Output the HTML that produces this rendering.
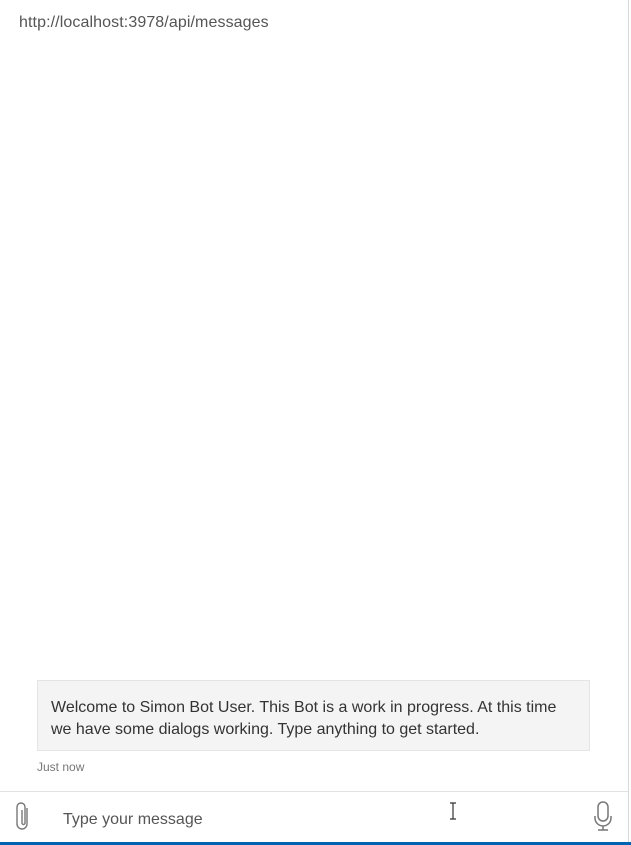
<!DOCTYPE html>
<html><head><meta charset="utf-8"><style>
html,body{margin:0;padding:0;width:631px;height:845px;overflow:hidden;background:#fff;font-family:"Segoe UI","Liberation Sans",sans-serif;}
.rb{position:absolute;left:628px;top:0;width:1px;height:845px;background:#d8d8d8}
.url{position:absolute;left:19px;top:14px;font-size:16px;letter-spacing:0.1px;color:#555}
.msg{position:absolute;left:37px;top:680px;width:553px;height:71px;background:#f4f4f4;border:1px solid #e4e4e4;box-sizing:border-box;padding:16px 13px 0;font-size:16px;line-height:22px;color:#333}
.time{position:absolute;left:37px;top:760px;font-size:12px;color:#777}
.bar{position:absolute;left:0;top:791px;width:628px;height:1px;background:#e2e2e2}
.ph{position:absolute;left:63px;top:811px;font-size:16px;color:#555}
.blue{position:absolute;left:0;top:842px;width:631px;height:3px;background:#0063b1}
</style></head><body>
<div class="rb"></div>
<div class="url">http://localhost:3978/api/messages</div>
<div class="msg">Welcome to Simon Bot User. This Bot is a work in progress. At this time we have some dialogs working. Type anything to get started.</div>
<div class="time">Just now</div>
<div class="bar"></div>
<svg style="position:absolute;left:15px;top:801px" width="18" height="30" viewBox="0 0 18 30"><path d="M12 7 V23 a5 5 0 0 1 -10 0 V6 a4 4 0 0 1 8 0 V22 a1.5 1.5 0 0 1 -3 0 V9" fill="none" stroke="#777" stroke-width="1.4"/></svg>
<div class="ph">Type your message</div>
<svg style="position:absolute;left:448px;top:802px" width="10" height="18" viewBox="0 0 10 18"><path d="M2 1h6M5 1v16M2 17h6" stroke="#333" stroke-width="1.2" fill="none"/></svg>
<svg style="position:absolute;left:592px;top:801px" width="22" height="30" viewBox="0 0 22 30"><rect x="6" y="1" width="10" height="19" rx="5" fill="none" stroke="#777" stroke-width="1.5"/><path d="M3 15v2a8 8 0 0 0 16 0v-2M11 25v4M6 29h10" fill="none" stroke="#777" stroke-width="1.5"/></svg>
<div class="blue"></div>
</body></html>
